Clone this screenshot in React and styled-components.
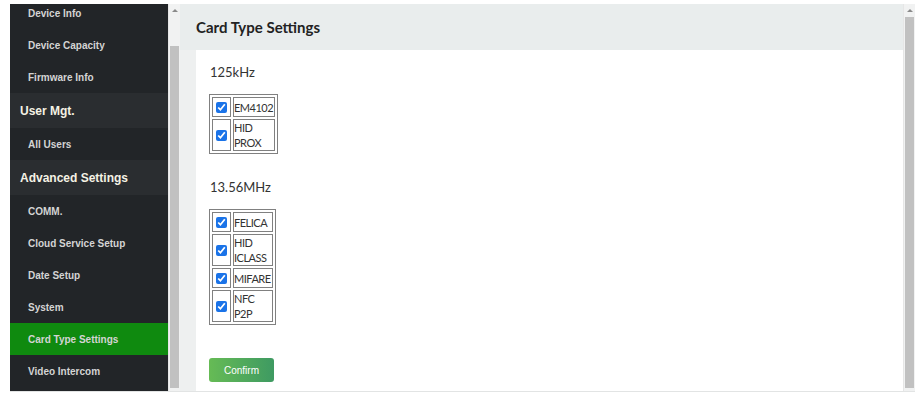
import React from "react";
import styled, { createGlobalStyle } from "styled-components";

const GlobalStyle = createGlobalStyle`
  html, body {
    margin: 0;
    background: #ffffff;
  }
`;

const Frame = styled.div`
  display: flex;
  height: 397px;
  box-sizing: border-box;
  padding: 4px 7px 5px 10px;
`;

const Window = styled.div`
  display: flex;
  flex: 1;
  border-bottom: 1px solid #e2e4e4;
  overflow: hidden;
`;

const Sidebar = styled.nav`
  width: 158px;
  background: #222528;
  overflow: hidden;
  font-family: "Liberation Sans", Arial, sans-serif;
`;

const Menu = styled.div`
  display: flex;
  flex-direction: column;
  margin-top: -7px; /* list is scrolled a little */
`;

const Item = styled.div`
  height: 32px;
  flex-shrink: 0;
  display: flex;
  align-items: center;
  padding-left: 18px;
  font-size: 10px;
  font-weight: bold;
  color: #d4d4d4;
  background: ${(p) => (p.active ? "#0f8a0f" : "transparent")};
`;

const Group = styled.div`
  height: 35px;
  flex-shrink: 0;
  display: flex;
  align-items: center;
  padding-left: 10px;
  font-size: 12px;
  font-weight: bold;
  color: #f5f2e4;
  background: #2a2d30;
`;

const Scrollbar = styled.div`
  width: 12px;
  display: flex;
  flex-direction: column;
  align-items: center;
  background: #f1f2f2;
  border-left: 1px solid #e6e6e6;
  box-sizing: border-box;
`;

const Arrow = styled.div`
  height: ${(p) => p.gap}px;
  flex-shrink: 0;
  width: 100%;
  display: flex;
  justify-content: center;
  align-items: flex-start;
  padding-top: 5px;
  box-sizing: border-box;
  &::before {
    content: "";
    border-left: 3px solid transparent;
    border-right: 3px solid transparent;
    border-bottom: 3px solid #8a8a8a;
  }
`;

const Thumb = styled.div`
  flex: 1;
  width: 9px;
  margin-bottom: 3px;
  background: #c1c1c1;
`;

const Main = styled.main`
  flex: 1;
  display: flex;
  flex-direction: column;
  background: #eef0f0;
  font-family: Lato, "Noto Sans", sans-serif;
  color: #333;
`;

const Header = styled.h2`
  margin: 0;
  height: 46px;
  flex-shrink: 0;
  display: flex;
  align-items: center;
  padding-left: 16px;
  font-size: 15px;
  font-weight: bold;
  color: #222;
  background: #e9eded;
`;

const Card = styled.section`
  flex: 1;
  min-height: 0;
  margin-left: 16px;
  background: #ffffff;
  padding: 12px 13px;
`;

const Freq = styled.div`
  font-size: 13px;
  height: 20px;
  line-height: 20px;
  margin-left: 1px;
  margin-bottom: 12px;
`;

const Types = styled.table`
  width: 1px;
  border: 1px solid #808080;
  border-spacing: 2px;
  margin-bottom: ${(p) => p.space}px;
  font-size: 11px;
  letter-spacing: -0.5px;
  line-height: 15px;
  td {
    border: 1px solid #808080;
    padding: 0 1px 0 0;
    vertical-align: middle;
  }
`;

const Check = styled.input`
  margin: 4px 2px 3px 3px;
  width: 11px;
  height: 11px;
  display: block;
  accent-color: #1a73e8;
`;

const Confirm = styled.button`
  display: block;
  width: 65px;
  height: 24px;
  padding: 0;
  border: none;
  border-radius: 3px;
  color: #fff;
  font-family: "Liberation Sans", Arial, sans-serif;
  font-size: 10px;
  background: linear-gradient(90deg, #66bb55, #3e9a62);
`;

const low = ["EM4102", "HID PROX"];
const high = ["FELICA", "HID ICLASS", "MIFARE", "NFC P2P"];

const TypeTable = ({ names, space }) => (
  <Types space={space}>
    <tbody>
      {names.map((n) => (
        <tr key={n}>
          <td>
            <Check type="checkbox" defaultChecked />
          </td>
          <td>{n}</td>
        </tr>
      ))}
    </tbody>
  </Types>
);

export default function App() {
  return (
    <>
      <GlobalStyle />
      <Frame>
        <Window>
          <Sidebar>
            <Menu>
              <Item>Device Info</Item>
              <Item>Device Capacity</Item>
              <Item>Firmware Info</Item>
              <Group>User Mgt.</Group>
              <Item>All Users</Item>
              <Group>Advanced Settings</Group>
              <Item>COMM.</Item>
              <Item>Cloud Service Setup</Item>
              <Item>Date Setup</Item>
              <Item>System</Item>
              <Item active>Card Type Settings</Item>
              <Item>Video Intercom</Item>
            </Menu>
          </Sidebar>
          <Scrollbar>
            <Arrow gap={42} />
            <Thumb />
          </Scrollbar>
          <Main>
            <Header>Card Type Settings</Header>
            <Card>
              <Freq>125kHz</Freq>
              <TypeTable names={low} space={23} />
              <Freq>13.56MHz</Freq>
              <TypeTable names={high} space={33} />
              <Confirm>Confirm</Confirm>
            </Card>
          </Main>
          <Scrollbar>
            <Arrow gap={13} />
            <Thumb />
          </Scrollbar>
        </Window>
      </Frame>
    </>
  );
}
